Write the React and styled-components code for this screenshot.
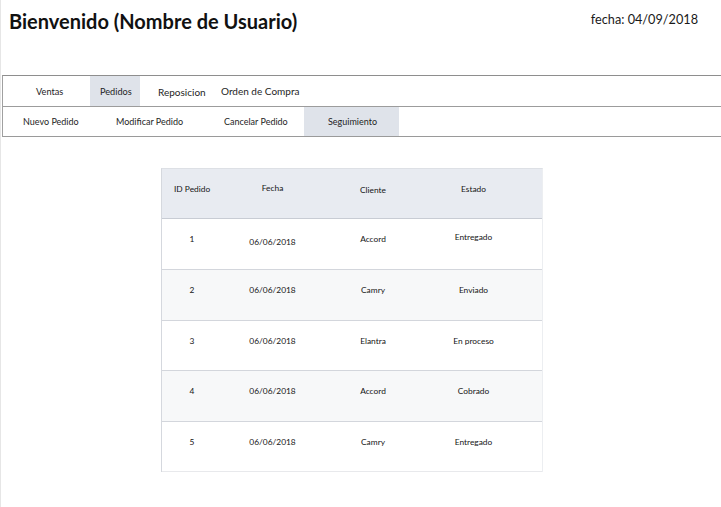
import styled, { createGlobalStyle } from "styled-components";

const Global = createGlobalStyle`
  body {
    margin: 0;
    background: #fff;
    font-family: Lato, "Open Sans", sans-serif;
    color: #1e1e1e;
  }
`;

const Page = styled.div`
  width: 721px;
  min-height: 507px;
  border-left: 1px solid #e6e6e6;
  box-sizing: border-box;
`;

const Header = styled.header`
  display: flex;
  justify-content: space-between;
  align-items: flex-start;
  height: 75px;
  padding: 8px 23px 0 8px;
  box-sizing: border-box;
`;

const Title = styled.h1`
  margin: 0;
  font-size: 20px;
  font-weight: 700;
  line-height: 26px;
  color: #111;
`;

const DateText = styled.div`
  margin-top: 3px;
  font-size: 12.7px;
  line-height: 17px;
  color: #1a1a1a;
`;

const Nav = styled.nav`
  margin-left: 1px;
  border-left: 1px solid #a0a0a0;
  border-top: 1px solid #8e8e8e;
  border-bottom: 1px solid #9a9a9a;
`;

const NavRow = styled.div`
  display: flex;
  border-top: ${(p) => (p.split ? "1px solid #9c9c9c" : "none")};
  height: ${(p) => (p.split ? "29px" : "30px")};
  font-size: ${(p) => (p.split ? "9px" : "10px")};
`;

const Tab = styled.div`
  width: ${(p) => p.w}px;
  padding-left: ${(p) => p.pl}px;
  box-sizing: border-box;
  display: flex;
  align-items: center;
  font-size: ${(p) => (p.fs ? `${p.fs}px` : "inherit")};
  white-space: nowrap;
  color: #1e1e1e;
  background: ${(p) => (p.active ? "#dfe3ea" : "transparent")};
  padding-top: ${(p) => p.dy || 0}px;
`;

const TableWrap = styled.div`
  margin: 31px 0 0 160px;
  width: 382px;
  box-sizing: border-box;
  border-top: 1px solid #dde0e5;
  border-left: 1px solid #d5d8de;
  border-right: 1px solid #eceef1;
`;

const Row = styled.div`
  display: grid;
  grid-template-columns: 60px 101px 100px 101px 1fr;
  box-sizing: border-box;
  height: ${(p) => p.h}px;
  background: ${(p) => (p.head ? "#e8ebf1" : p.alt ? "#f7f8f9" : "#fff")};
  border-bottom: 1px solid ${(p) => (p.head ? "#c8ccd4" : p.last ? "#e8e9ec" : "#d3d6dc")};
`;

const Cell = styled.div`
  font-size: 8.4px;
  line-height: 11px;
  padding-top: ${(p) => 15 + (p.dy || 0)}px;
  text-align: ${(p) => (p.left ? "left" : "center")};
  padding-left: ${(p) => (p.left ? "12px" : "0")};
  color: #151515;
  white-space: nowrap;
`;

const topTabs = [
  { label: "Ventas", w: 87, pl: 33, fs: 9.2 },
  { label: "Pedidos", w: 50, pl: 10, fs: 9.2, active: true },
  { label: "Reposicion", w: 80, pl: 18, dy: 2 },
  { label: "Orden de Compra", w: 100, pl: 1 },
];

const subTabs = [
  { label: "Nuevo Pedido", w: 96, pl: 20 },
  { label: "Modificar Pedido", w: 110, pl: 17 },
  { label: "Cancelar Pedido", w: 95, pl: 15 },
  { label: "Seguimiento", w: 95, pl: 24, active: true },
];

const pedidos = [
  { id: 1, fecha: "06/06/2018", cliente: "Accord", estado: "Entregado", h: 51, dy: [0, 3, 0, -2] },
  { id: 2, fecha: "06/06/2018", cliente: "Camry", estado: "Enviado", h: 51 },
  { id: 3, fecha: "06/06/2018", cliente: "Elantra", estado: "En proceso", h: 50 },
  { id: 4, fecha: "06/06/2018", cliente: "Accord", estado: "Cobrado", h: 51 },
  { id: 5, fecha: "06/06/2018", cliente: "Camry", estado: "Entregado", h: 50 },
];

const App = () => {
  return (
    <Page>
      <Global />
      <Header>
        <Title>Bienvenido (Nombre de Usuario)</Title>
        <DateText>fecha: 04/09/2018</DateText>
      </Header>

      <Nav>
        <NavRow>
          {topTabs.map((t) => (
            <Tab key={t.label} w={t.w} pl={t.pl} dy={t.dy} fs={t.fs} active={t.active}>
              {t.label}
            </Tab>
          ))}
        </NavRow>
        <NavRow split>
          {subTabs.map((t) => (
            <Tab key={t.label} w={t.w} pl={t.pl} active={t.active}>
              {t.label}
            </Tab>
          ))}
        </NavRow>
      </Nav>

      <TableWrap>
        <Row head h={50}>
          <Cell left>ID Pedido</Cell>
          <Cell dy={-1}>Fecha</Cell>
          <Cell dy={1}>Cliente</Cell>
          <Cell>Estado</Cell>
          <Cell />
        </Row>
        {pedidos.map((p, i) => {
          const dy = p.dy || [0, 0, 0, 0];
          return (
            <Row key={p.id} h={p.h} alt={i % 2 === 1} last={i === pedidos.length - 1}>
              <Cell dy={dy[0]}>{p.id}</Cell>
              <Cell dy={dy[1]}>{p.fecha}</Cell>
              <Cell dy={dy[2]}>{p.cliente}</Cell>
              <Cell dy={dy[3]}>{p.estado}</Cell>
              <Cell />
            </Row>
          );
        })}
      </TableWrap>
    </Page>
  );
};

export default App;
